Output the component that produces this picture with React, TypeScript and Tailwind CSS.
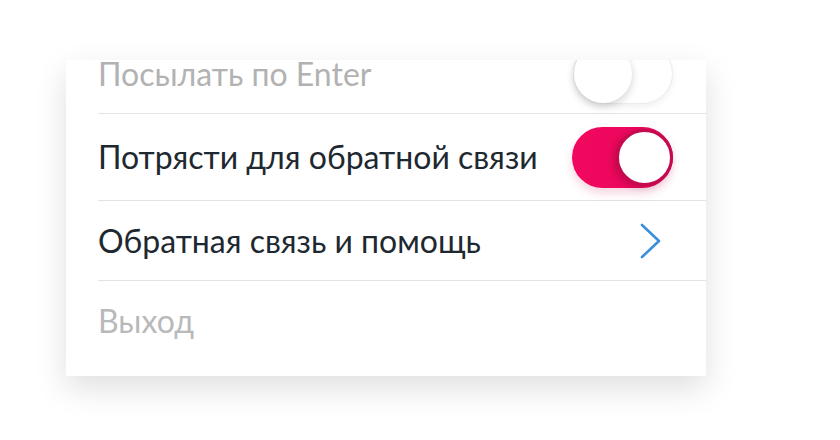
import React from 'react';

function Toggle({ on }: { on: boolean }) {
  if (on) {
    return (
      <div className="relative h-[61px] w-[101px] rounded-full bg-[linear-gradient(90deg,#f2075f,#e5085a)] shadow-[0_5px_10px_rgba(200,10,80,0.18)]">
        <div className="absolute right-0 top-[2px] h-[57px] w-[57px] rounded-full border-[3px] border-[#c4094f] bg-white shadow-[-3px_2px_6px_rgba(0,0,0,0.15)]" />
      </div>
    );
  }
  return (
    <div className="relative h-[61px] w-[100px] rounded-full border border-[#ececec] bg-white shadow-[0_3px_6px_rgba(0,0,0,0.06)]">
      <div className="absolute left-0 top-[1px] h-[58px] w-[58px] rounded-full bg-white shadow-[0_3px_8px_rgba(0,0,0,0.18)]" />
    </div>
  );
}

function Chevron() {
  return (
    <svg width="22" height="36" viewBox="0 0 22 36" fill="none">
      <path d="M2 2 L19 18 L2 34" stroke="#3a8fdd" strokeWidth="2.6" strokeLinecap="round" strokeLinejoin="round" />
    </svg>
  );
}

export default function App() {
  const font = { fontFamily: 'Lato, "Noto Sans", sans-serif' };
  return (
    <div className="h-[440px] w-[840px] bg-white pl-[66px] pt-[60px]" style={font}>
      <div className="h-[316px] w-[640px] overflow-hidden bg-white shadow-[0_12px_30px_rgba(0,0,0,0.13)]">
        <div className="-mt-[26px] pl-[32px]">
          <div className="flex h-[80px] items-center justify-between border-b border-[#e3e3e3] pr-[33px]">
            <span className="text-[32px] text-[#b2b2b2]">Посылать по Enter</span>
            <Toggle on={false} />
          </div>
          <div className="flex h-[87px] items-center justify-between border-b border-[#e3e3e3] pr-[33px]">
            <span className="text-[32px] text-[#1e2830]">Потрясти для обратной связи</span>
            <Toggle on={true} />
          </div>
          <div className="flex h-[80px] items-center justify-between border-b border-[#e3e3e3] pr-[44px]">
            <span className="text-[32px] text-[#1e2830]">Обратная связь и помощь</span>
            <Chevron />
          </div>
          <div className="flex h-[80px] items-center">
            <span className="text-[32px] text-[#b9b9b9]">Выход</span>
          </div>
        </div>
      </div>
    </div>
  );
}
